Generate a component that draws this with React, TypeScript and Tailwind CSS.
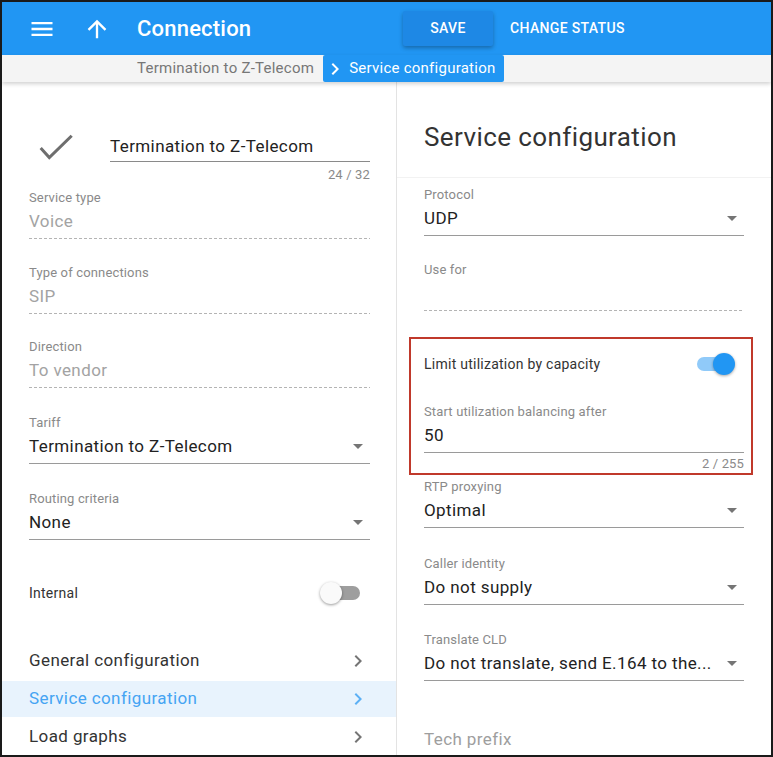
import React from "react";

const font = { fontFamily: "Roboto, 'Noto Sans', sans-serif" };

const Caret = () => (
    <svg width="24" height="24" viewBox="0 0 24 24" className="shrink-0 fill-[#757575]">
        <path d="M7 10l5 5 5-5z" />
    </svg>
);

const Chevron = ({ className }: { className: string }) => (
    <svg width="24" height="24" viewBox="0 0 24 24" className={className}>
        <path d="M10 6L8.59 7.41 13.17 12l-4.58 4.59L10 18l6-6z" />
    </svg>
);

interface FieldProps {
    label: string;
    value?: string;
    kind: "select" | "disabled" | "text";
    className?: string;
}

const Field: React.FC<FieldProps> = ({ label, value, kind, className }) => (
    <div className={className}>
        <div className="text-[13px] leading-4 tracking-[0.15px] text-[#8a8a8a]">{label}</div>
        <div className="mt-[3px] flex h-[29px] items-start pb-[5px]">
            <span
                className={
                    kind === "disabled"
                        ? "flex-1 whitespace-nowrap text-[17px] leading-6 tracking-[0.4px] text-[#a3a3a3]"
                        : "flex-1 whitespace-nowrap text-[17px] leading-6 tracking-[0.4px] text-[#222]"
                }
            >
                {value}
            </span>
            {kind === "select" && <Caret />}
        </div>
        {kind === "disabled" ? (
            <div className="h-px bg-[repeating-linear-gradient(to_right,#b4b4b4_0_3px,transparent_3px_5px)]" />
        ) : (
            <div className="h-px bg-[#9a9a9a]" />
        )}
    </div>
);

const navItems = [
    { name: "General configuration", active: false },
    { name: "Service configuration", active: true },
    { name: "Load graphs", active: false },
];

export default function App() {
    return (
        <div
            style={font}
            className="flex h-[757px] w-[773px] flex-col overflow-hidden border-2 border-[#1a1a1a] bg-white"
        >
            {/* top bar */}
            <div className="flex h-[53px] shrink-0 items-center bg-[#2196f3] text-white">
                <svg width="28" height="28" viewBox="0 0 24 24" className="ml-[26px] fill-white">
                    <path d="M3 18h18v-2H3v2zm0-5h18v-2H3v2zm0-7v2h18V6H3z" />
                </svg>
                <svg width="28" height="28" viewBox="0 0 24 24" className="ml-[27px] fill-white">
                    <path d="M4 12l1.41 1.41L11 7.83V20h2V7.83l5.58 5.59L20 12l-8-8-8 8z" />
                </svg>
                <div className="ml-[26px] w-[266px] text-[22px] font-medium leading-7 tracking-[0.2px]">Connection</div>
                <button
                    type="button"
                    className="flex h-[35px] w-[90px] items-center justify-center rounded-[2px] bg-[#1e88e5] text-[14px] font-medium tracking-[0.3px] shadow-[0_2px_4px_rgba(0,0,0,0.3)]"
                >
                    SAVE
                </button>
                <button type="button" className="ml-[17px] text-[14px] font-medium tracking-[0.35px]">
                    CHANGE STATUS
                </button>
            </div>

            {/* breadcrumbs */}
            <div className="relative z-10 flex h-[27px] shrink-0 items-center bg-[#f4f4f4] pl-[135px] shadow-[0_2px_4px_rgba(0,0,0,0.18)]">
                <span className="text-[15px] tracking-[0.25px] text-[#777]">Termination to Z-Telecom</span>
                <div className="ml-[9px] flex h-full items-center rounded-[2px] bg-[#2196f3] pr-[8px] text-white">
                    <Chevron className="fill-white" />
                    <span className="ml-[2px] text-[15px] tracking-[0.25px]">Service configuration</span>
                </div>
            </div>

            <div className="flex min-h-0 flex-1">
                {/* left panel */}
                <div className="flex w-[395px] shrink-0 flex-col border-r border-[#e3e3e3]">
                    <div className="pl-[27px] pr-[26px] pt-[51px]">
                        <div className="flex items-start">
                            <svg width="36" height="28" viewBox="0 0 36 28" className="ml-[9px] shrink-0">
                                <polyline
                                    points="2.7,15 11.3,24.5 33.7,2.7"
                                    fill="none"
                                    stroke="#6e6e6e"
                                    strokeWidth="3"
                                />
                            </svg>
                            <div className="ml-[36px] mt-[1px] flex-1">
                                <div className="border-b border-[#8a8a8a] pb-[3px] text-[17px] leading-6 tracking-[0.4px] text-[#222]">
                                    Termination to Z-Telecom
                                </div>
                            </div>
                        </div>
                        <div className="mt-[6px] text-right text-[13px] leading-[14px] tracking-[0.15px] text-[#8a8a8a]">
                            24 / 32
                        </div>

                        <Field className="mt-[8px]" label="Service type" value="Voice" kind="disabled" />
                        <Field className="mt-[26px]" label="Type of connections" value="SIP" kind="disabled" />
                        <Field className="mt-[25px]" label="Direction" value="To vendor" kind="disabled" />
                        <Field className="mt-[27px]" label="Tariff" value="Termination to Z-Telecom" kind="select" />
                        <Field className="mt-[27px]" label="Routing criteria" value="None" kind="select" />

                        <div className="mt-[35px] flex h-[36px] items-center justify-between">
                            <span className="text-[14px] tracking-[0.25px] text-[#333]">Internal</span>
                            <div className="relative mr-[10px] h-[24px] w-[40px]">
                                <div className="absolute left-[6px] top-[5px] h-[14px] w-[34px] rounded-full bg-[#9e9e9e]" />
                                <div className="absolute left-0 top-[1px] h-[22px] w-[22px] rounded-full bg-[#fafafa] shadow-[0_1px_3px_rgba(0,0,0,0.4)]" />
                            </div>
                        </div>
                    </div>

                    <div className="mt-[31px]">
                        {navItems.map(item => (
                            <div
                                key={item.name}
                                className={
                                    item.active
                                        ? "my-px flex h-[36px] items-center justify-between bg-[#e8f3fd] pl-[27px] pr-[26px]"
                                        : "flex h-[38px] items-center justify-between pl-[27px] pr-[26px]"
                                }
                            >
                                <span
                                    className={
                                        item.active
                                            ? "text-[17px] tracking-[0.4px] text-[#45a4f3]"
                                            : "text-[17px] tracking-[0.4px] text-[#333]"
                                    }
                                >
                                    {item.name}
                                </span>
                                <Chevron className={item.active ? "fill-[#5cb0f5]" : "fill-[#757575]"} />
                            </div>
                        ))}
                    </div>
                </div>

                {/* right panel */}
                <div className="flex min-w-0 flex-1 flex-col">
                    <div className="border-b border-[#f2f2f2] pb-[24px] pl-[27px] pr-[27px] pt-[39px]">
                        <h1 className="text-[26px] leading-8 tracking-[0.4px] text-[#333]">Service configuration</h1>
                    </div>
                    <div className="pl-[27px] pr-[27px]">
                        <Field className="mt-[9px]" label="Protocol" value="UDP" kind="select" />
                        <Field className="mt-[26px]" label="Use for" value="" kind="disabled" />

                        <div className="-ml-[15px] -mr-[9px] mt-[26px] border-2 border-[#c0392b] pb-[2px] pl-[13px] pr-[7px] pt-[13px]">
                            <div className="flex h-[24px] items-center justify-between">
                                <span className="text-[14px] tracking-[0.25px] text-[#333]">
                                    Limit utilization by capacity
                                </span>
                                <div className="relative mr-[9px] h-[24px] w-[38px]">
                                    <div className="absolute left-0 top-[5px] h-[14px] w-[34px] rounded-full bg-[#90caf9]" />
                                    <div className="absolute right-0 top-[1px] h-[22px] w-[22px] rounded-full bg-[#2196f3] shadow-[0_1px_3px_rgba(0,0,0,0.35)]" />
                                </div>
                            </div>
                            <Field className="mt-[28px]" label="Start utilization balancing after" value="50" kind="text" />
                            <div className="mt-[4px] text-right text-[13px] leading-[14px] tracking-[0.15px] text-[#8a8a8a]">
                                2 / 255
                            </div>
                        </div>

                        <Field className="mt-[4px]" label="RTP proxying" value="Optimal" kind="select" />
                        <Field className="mt-[28px]" label="Caller identity" value="Do not supply" kind="select" />
                        <Field
                            className="mt-[27px]"
                            label="Translate CLD"
                            value="Do not translate, send E.164 to the..."
                            kind="select"
                        />
                        <div className="mt-[46px] text-[17px] leading-6 tracking-[0.4px] text-[#9e9e9e]">Tech prefix</div>
                    </div>
                </div>
            </div>
        </div>
    );
}
